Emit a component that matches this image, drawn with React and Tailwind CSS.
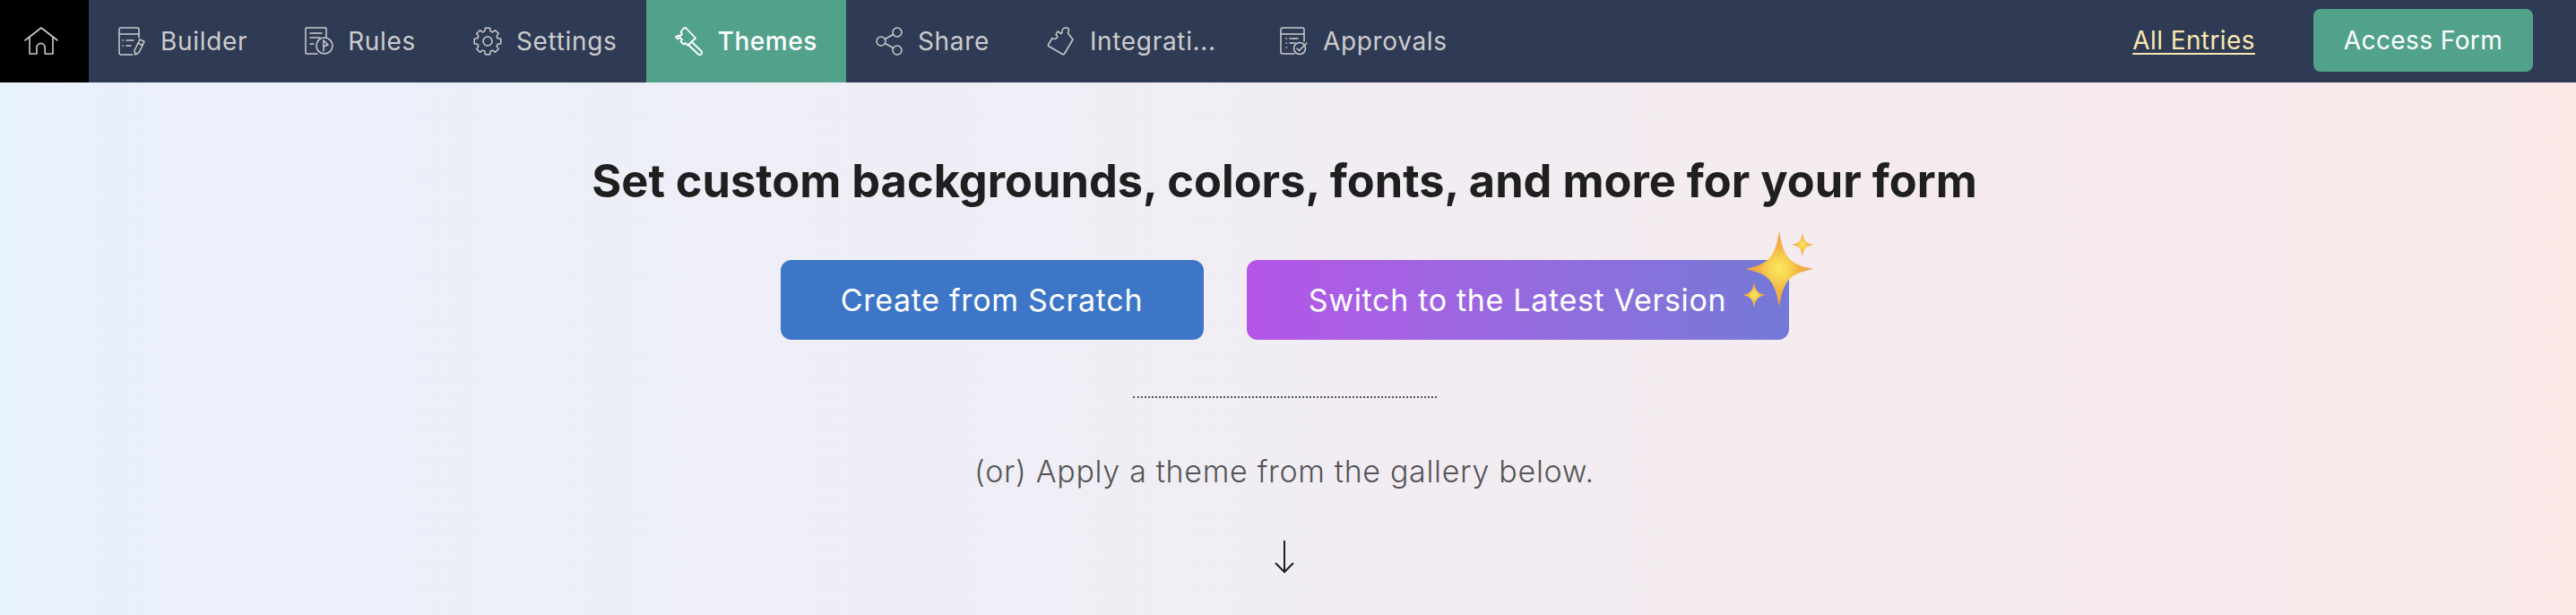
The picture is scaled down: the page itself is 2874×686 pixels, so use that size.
import React from "react";

const Icon = ({ children, className = "w-8 h-8" }) => (
    <svg
        viewBox="0 0 32 32"
        className={`${className} shrink-0`}
        fill="none"
        stroke="currentColor"
        strokeWidth="1.5"
        strokeLinecap="round"
        strokeLinejoin="round"
    >
        {children}
    </svg>
);

const HomeIcon = () => (
    <svg viewBox="0 0 38 32" className="w-[38px] h-8" fill="none" stroke="currentColor" strokeWidth="1.6" strokeLinecap="round" strokeLinejoin="round">
        <path d="M1 15 19 1l18 14" />
        <path d="M6 11v19h8v-7a4.6 4.6 0 0 1 9.2 0v7H32V11" />
    </svg>
);

const BuilderIcon = () => (
    <Icon>
        <path d="M24 12V3a2 2 0 0 0-2-2H4a2 2 0 0 0-2 2v26a2 2 0 0 0 2 2h13" />
        <path d="M2 8h22" />
        <path d="M6 15h.5M6 21h.5M10 15h8M10 21h5" />
        <path d="M25 14l5 2.5-6 12-4 2.5-1-4.5z" />
        <path d="M23 18l5 2.5" />
    </Icon>
);

const RulesIcon = () => (
    <Icon>
        <path d="M14 30H2a1 1 0 0 1-1-1V2a1 1 0 0 1 1-1h21a1 1 0 0 1 1 1v10" />
        <path d="M6 7h13M6 12h11M6 19h4" />
        <circle cx="22" cy="21" r="9" />
        <path d="M21 27V15l5 5-5 2" />
    </Icon>
);

const SettingsIcon = () => {
    const cx = 16;
    const cy = 16;
    const teeth = 8;
    let d = "";
    for (let i = 0; i < teeth; i++) {
        const a = (i / teeth) * Math.PI * 2 - Math.PI / 2;
        const step = Math.PI / teeth;
        const pts = [
            [a - step * 0.45, 15],
            [a + step * 0.45, 15],
            [a + step * 0.7, 11.6],
            [a + step * 1.3, 11.6],
        ];
        pts.forEach(([ang, r], j) => {
            const x = (cx + Math.cos(ang) * r).toFixed(2);
            const y = (cy + Math.sin(ang) * r).toFixed(2);
            d += `${i === 0 && j === 0 ? "M" : "L"}${x} ${y}`;
        });
    }
    d += "Z";
    return (
        <Icon>
            <path d={d} />
            <circle cx="16" cy="16" r="5" />
        </Icon>
    );
};

const ThemesIcon = () => (
    <Icon>
        <path d="M10 1.500a2 2 0 0 1 2.500 0L23 12.500l-8.500 8-3-2.500-1.500 1.500-3.500-3 1.500-2.500-2.500-2-2.500 1.500L1 11l3-1.500 1.500 1L8 8 6.500 5.500z" strokeWidth="1.8" />
        <path d="M18.500 16.500 29.500 27a2.500 2.500 0 0 1-3.500 3.500L15 20" strokeWidth="1.8" />
    </Icon>
);

const ShareIcon = () => (
    <Icon>
        <circle cx="25" cy="6" r="5" />
        <circle cx="7" cy="16" r="5" />
        <circle cx="25" cy="26" r="5" />
        <path d="M11.500 13.500 20.500 8.500M11.500 18.500l9 5" />
    </Icon>
);

const PuzzleIcon = () => (
    <Icon>
        <path d="M1.500 20 6 12.500c2 1.500 5 1 5.500-1 .4-1.500-.5-2.500-1.500-3l2-3.500 4 2.500c1-.5 1-1.500 1-2.500 0-2 1.500-4 4-4 2 0 3.500 1 3.500 2.500 0 2-1 2.500-1 3.500L29 14l-9.500 16a1.500 1.500 0 0 1-2 .5L2 21.500a1 1 0 0 1-.5-1.500z" />
    </Icon>
);

const ApprovalsIcon = () => (
    <Icon>
        <path d="M16 30H3a2 2 0 0 1-2-2V3a2 2 0 0 1 2-2h22a2 2 0 0 1 2 2v13" />
        <path d="M1 8h26" />
        <path d="M7 13h.5M7 18h.5M7 23h.5M11 13h9M11 18h6" />
        <circle cx="22" cy="24" r="6.500" />
        <path d="M19 24l2.500 2.500L30 18" />
    </Icon>
);

const Sparkle = ({ x, y, r, id }) => (
    <path
        d={`M${x} ${y - r * 1.12}C${x + r * 0.12} ${y - r * 0.35} ${x + r * 0.3} ${y - r * 0.14} ${x + r} ${y}C${x + r * 0.3} ${y + r * 0.14} ${x + r * 0.12} ${y + r * 0.35} ${x} ${y + r * 1.12}C${x - r * 0.12} ${y + r * 0.35} ${x - r * 0.3} ${y + r * 0.14} ${x - r} ${y}C${x - r * 0.3} ${y - r * 0.14} ${x - r * 0.12} ${y - r * 0.35} ${x} ${y - r * 1.12}Z`}
        fill={`url(#${id})`}
    />
);

const Sparkles = () => (
    <svg viewBox="0 0 90 100" className="absolute left-[551px] top-[-33px] w-[90px] h-[100px]">
        <defs>
            <radialGradient id="spark">
                <stop offset="0%" stopColor="#f9e85e" />
                <stop offset="28%" stopColor="#f8d452" />
                <stop offset="60%" stopColor="#f4b042" />
                <stop offset="100%" stopColor="#f0a03a" />
            </radialGradient>
        </defs>
        <Sparkle x={43} y={43} r={38} id="spark" />
        <Sparkle x={69} y={16} r={12} id="spark" />
        <Sparkle x={15} y={72} r={13} id="spark" />
    </svg>
);

const navItems = [
    { label: "Builder", icon: <BuilderIcon /> },
    { label: "Rules", icon: <RulesIcon /> },
    { label: "Settings", icon: <SettingsIcon /> },
    { label: "Themes", icon: <ThemesIcon />, active: true },
    { label: "Share", icon: <ShareIcon /> },
    { label: "Integrati...", icon: <PuzzleIcon />, textClass: "w-[140px] whitespace-nowrap", itemClass: "pr-[40px]" },
    { label: "Approvals", icon: <ApprovalsIcon /> },
];

const App = () => {
    return (
        <div className="h-screen overflow-hidden flex flex-col bg-[linear-gradient(90deg,#e8f3fe_0%,#eaf0fb_4%,#f1edf4_50%,#f9e9ea_96%,#fbe8e7_100%)] font-['Inter',sans-serif]">
            <nav className="h-[92px] shrink-0 flex items-stretch bg-[#2f3a54] text-[28px] tracking-[0.024em] text-[#cccccc]">
                <div className="w-[99px] pr-2 bg-black flex items-center justify-center">
                    <HomeIcon />
                </div>
                {navItems.map((item) => (
                    <div
                        key={item.label}
                        className={`flex items-center gap-4 px-8 ${item.active ? "bg-[#52a28b] text-white font-medium tracking-[0.02em]" : ""} ${item.itemClass || ""}`}
                    >
                        {item.icon}
                        <span className={item.textClass || ""}>{item.label}</span>
                    </div>
                ))}
                <div className="ml-auto flex items-center gap-[65px] pr-12 pb-[2px] tracking-[0.015em]">
                    <a className="text-[#f8e8b0] underline underline-offset-4">All Entries</a>
                    <button className="w-[245px] h-[70px] rounded-lg bg-[#52a28b] text-white">Access Form</button>
                </div>
            </nav>
            <main className="flex flex-col items-center pr-2">
                <h1 className="mt-[79px] text-[50.5px] leading-[62px] font-bold text-[#1f1f1f]">
                    Set custom backgrounds, colors, fonts, and more for your form
                </h1>
                <div className="mt-[57px] flex gap-12">
                    <button className="w-[472px] h-[89px] rounded-xl bg-[#3d76c6] text-white text-[34px] tracking-[0.02em]">
                        Create from Scratch
                    </button>
                    <div className="relative">
                        <button className="w-[605px] h-[89px] rounded-xl bg-linear-to-r from-[#b455e8] to-[#7379d6] text-white text-[34px] tracking-[0.02em]">
                            Switch to the Latest Version
                        </button>
                        <Sparkles />
                    </div>
                </div>
                <div className="mt-[63px] w-[339px] border-t-2 border-dotted border-[#555555]" />
                <p className="mt-[58px] text-[34px] leading-[48px] font-light tracking-[0.02em] text-[#555555]">
                    (or) Apply a theme from the gallery below.
                </p>
                <svg viewBox="0 0 24 38" className="mt-[52px] w-6 h-[38px]" fill="none" stroke="#1f1f1f" strokeWidth="2" strokeLinejoin="miter">
                    <path d="M12 1v35M2 26l10 10 10-10" />
                </svg>
            </main>
        </div>
    );
};

export default App;
